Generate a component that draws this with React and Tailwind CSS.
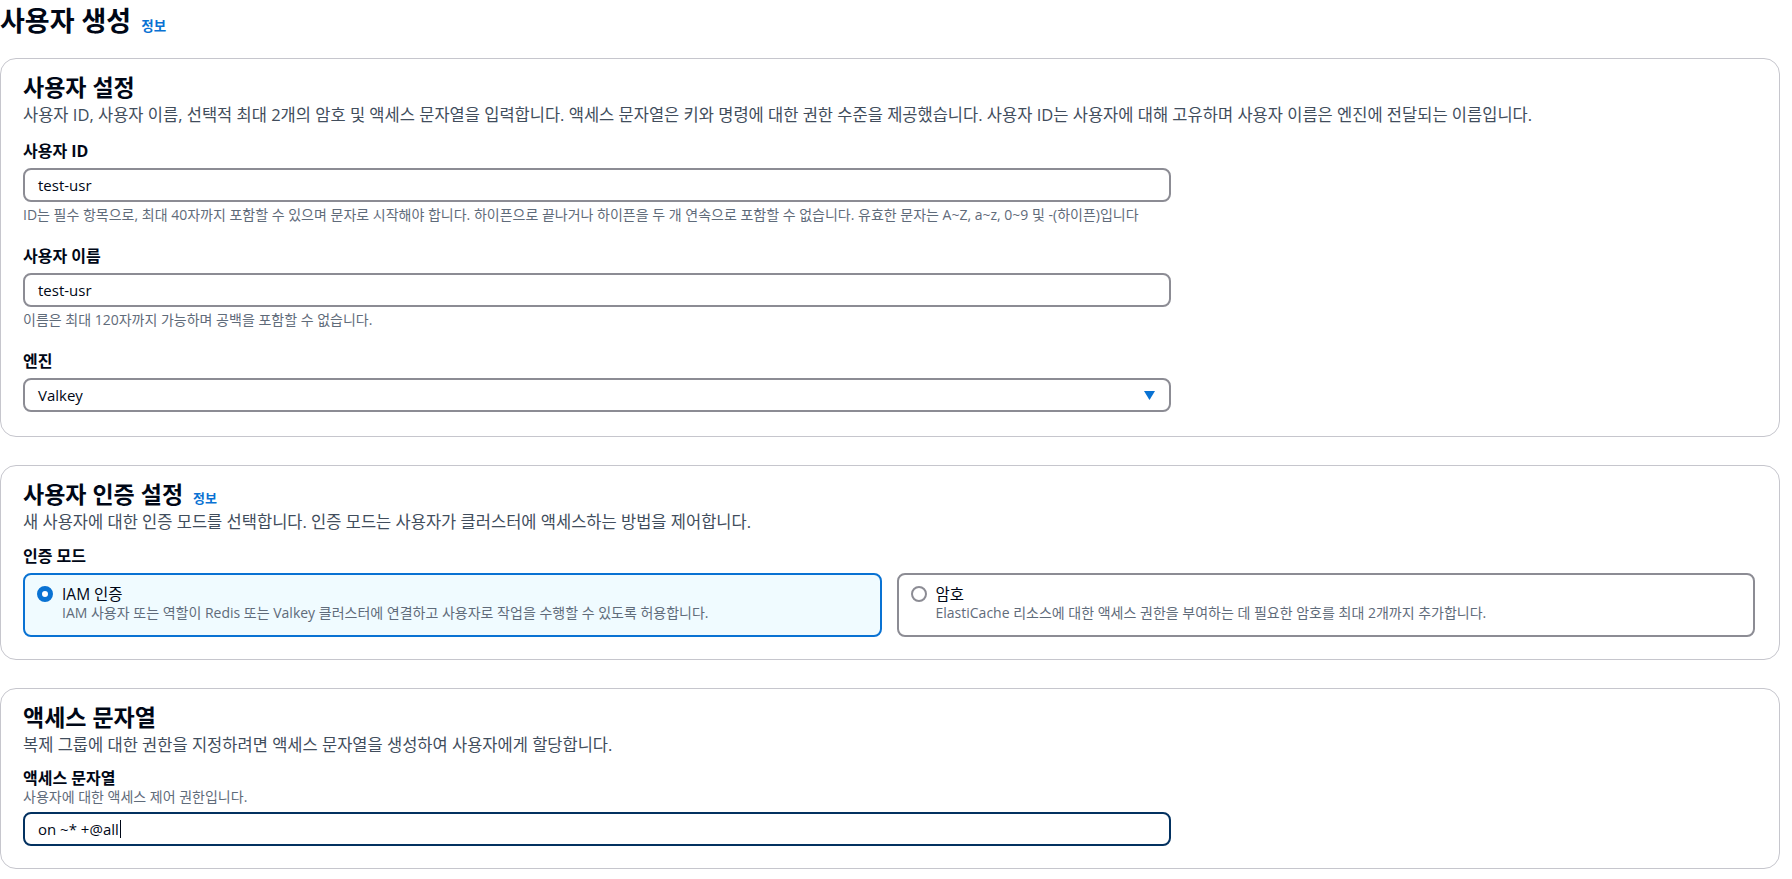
import React from 'react';

const font = { fontFamily: '"Open Sans", "Noto Sans CJK KR", sans-serif' };

const InfoLink = ({ big }) => (
    <span className={`ml-[10px] font-bold text-[#0972d3] leading-none ${big ? 'text-[13.5px]' : 'text-[13px]'}`}>정보</span>
);

const Card = ({ children }) => (
    <div className="border border-[#c6c6cd] rounded-[16px] bg-white pl-[22px] pr-[24px] pt-[15px]">
        {children}
    </div>
);

const CardHeader = ({ title, info, desc }) => (
    <div>
        <h2 className="flex items-baseline text-[23px] leading-[26px] font-bold text-[#000716]">
            {title}
            {info && <InfoLink />}
        </h2>
        <p className="mt-[4px] text-[16.5px] leading-[22px] text-[#414d5c]">{desc}</p>
    </div>
);

const Label = ({ children }) => (
    <div className="text-[16px] leading-[22px] font-bold text-[#000716]">{children}</div>
);

const Hint = ({ children }) => (
    <div className="mt-[4px] text-[14px] leading-[18px] text-[#5f6b7a]">{children}</div>
);

const TextInput = ({ value, focused }) => (
    <div
        className={`w-[1148px] h-[34px] rounded-[8px] border-2 flex items-center px-[13px] text-[15px] text-[#000716] ${
            focused ? 'border-[#033160]' : 'border-[#8c8c94]'
        }`}
    >
        {value}
        {focused && <span className="ml-px w-px h-[18px] bg-[#000716]" />}
    </div>
);

const RadioTile = ({ checked, title, desc }) => (
    <div
        className={`h-[64px] rounded-[8px] border-2 flex items-start px-[12px] pt-[9px] ${
            checked ? 'border-[#0972d3] bg-[#f0fbff]' : 'border-[#8c8c94] bg-white'
        }`}
    >
        <div className="h-[20px] flex items-center">
            {checked ? (
                <div className="w-4 h-4 rounded-full border-[5px] border-[#0972d3] bg-white" />
            ) : (
                <div className="w-4 h-4 rounded-full border-2 border-[#8c8c94] bg-white" />
            )}
        </div>
        <div className="ml-[9px]">
            <div className="text-[15.5px] leading-[20px] text-[#000716]">{title}</div>
            <div className="text-[14px] leading-[18px] text-[#5f6b7a]">{desc}</div>
        </div>
    </div>
);

export default function App() {
    return (
        <div className="w-[1792px] min-h-[879px] bg-white pr-[12px]" style={font}>
            {/* Page header */}
            <h1 className="flex items-baseline pt-[6px] text-[27px] leading-[30px] font-bold text-[#000716]">
                사용자 생성
                <InfoLink big />
            </h1>

            <div className="mt-[22px] flex flex-col gap-[28px]">
                {/* 사용자 설정 */}
                <Card>
                    <CardHeader
                        title="사용자 설정"
                        desc="사용자 ID, 사용자 이름, 선택적 최대 2개의 암호 및 액세스 문자열을 입력합니다. 액세스 문자열은 키와 명령에 대한 권한 수준을 제공했습니다. 사용자 ID는 사용자에 대해 고유하며 사용자 이름은 엔진에 전달되는 이름입니다."
                    />
                    <div className="mt-[14px]">
                        <Label>사용자 ID</Label>
                        <div className="mt-[6px]">
                            <TextInput value="test-usr" />
                        </div>
                        <Hint>
                            ID는 필수 항목으로, 최대 40자까지 포함할 수 있으며 문자로 시작해야 합니다. 하이픈으로 끝나거나 하이픈을 두 개 연속으로 포함할 수 없습니다. 유효한 문자는 A~Z, a~z, 0~9 및 -(하이픈)입니다
                        </Hint>
                    </div>
                    <div className="mt-[21px]">
                        <Label>사용자 이름</Label>
                        <div className="mt-[6px]">
                            <TextInput value="test-usr" />
                        </div>
                        <Hint>이름은 최대 120자까지 가능하며 공백을 포함할 수 없습니다.</Hint>
                    </div>
                    <div className="mt-[21px] pb-[24px]">
                        <Label>엔진</Label>
                        <div className="mt-[6px] w-[1148px] h-[34px] rounded-[8px] border-2 border-[#8c8c94] flex items-center justify-between pl-[13px] pr-[14px] text-[15px] text-[#000716]">
                            Valkey
                            <svg width="11" height="9" viewBox="0 0 11 9">
                                <polygon points="0,0 11,0 5.5,9" fill="#0972d3" />
                            </svg>
                        </div>
                    </div>
                </Card>

                {/* 사용자 인증 설정 */}
                <Card>
                    <CardHeader
                        title="사용자 인증 설정"
                        info
                        desc="새 사용자에 대한 인증 모드를 선택합니다. 인증 모드는 사용자가 클러스터에 액세스하는 방법을 제어합니다."
                    />
                    <div className="mt-[12px] pb-[22px]">
                        <Label>인증 모드</Label>
                        <div className="mt-[6px] grid grid-cols-2 gap-[15px]">
                            <RadioTile
                                checked
                                title="IAM 인증"
                                desc="IAM 사용자 또는 역할이 Redis 또는 Valkey 클러스터에 연결하고 사용자로 작업을 수행할 수 있도록 허용합니다."
                            />
                            <RadioTile
                                title="암호"
                                desc="ElastiCache 리소스에 대한 액세스 권한을 부여하는 데 필요한 암호를 최대 2개까지 추가합니다."
                            />
                        </div>
                    </div>
                </Card>

                {/* 액세스 문자열 */}
                <Card>
                    <CardHeader
                        title="액세스 문자열"
                        desc="복제 그룹에 대한 권한을 지정하려면 액세스 문자열을 생성하여 사용자에게 할당합니다."
                    />
                    <div className="mt-[12px] pb-[22px]">
                        <div className="text-[16px] leading-[20px] font-bold text-[#000716]">액세스 문자열</div>
                        <div className="text-[14px] leading-[18px] text-[#5f6b7a]">사용자에 대한 액세스 제어 권한입니다.</div>
                        <div className="mt-[6px]">
                            <TextInput value="on ~* +@all" focused />
                        </div>
                    </div>
                </Card>
            </div>
        </div>
    );
}
